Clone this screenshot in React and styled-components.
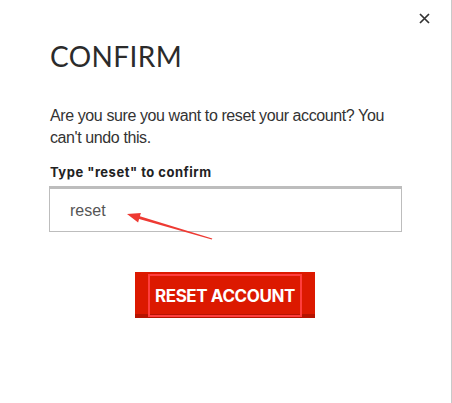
import React, { useState } from "react";
import styled, { createGlobalStyle } from "styled-components";

const GlobalStyle = createGlobalStyle`
  html, body {
    margin: 0;
    padding: 0;
    background: #ffffff;
  }
  * {
    box-sizing: border-box;
  }
`;

const ConfirmModal = () => {
  const [value, setValue] = useState("reset");

  return (
    <>
      <GlobalStyle />
      <ModalContainer>
        <CloseButton aria-label="close">
          <svg width="11" height="11" viewBox="0 0 11 11">
            <path d="M1 1L10 10M10 1L1 10" stroke="#333" strokeWidth="1.7" />
          </svg>
        </CloseButton>
        <Title>CONFIRM</Title>
        <Message>
          Are you sure you want to reset your account? You can't undo this.
        </Message>
        <Label htmlFor="confirm-input">Type "reset" to confirm</Label>
        <InputWrap>
          <Input
            id="confirm-input"
            value={value}
            onChange={(e) => setValue(e.target.value)}
          />
          {/* red annotation arrow */}
          <Arrow width="100" height="40" viewBox="0 0 100 40">
            <polygon
              points="8,8 21.9,6.9 20.9,10.3 93.3,32.6 92.8,33.4 20.1,13.1 19.1,16.5"
              fill="#ee3a33"
            />
          </Arrow>
        </InputWrap>
        <ButtonRow>
          <ResetButton disabled={value !== "reset"}>
            <Highlight>RESET ACCOUNT</Highlight>
          </ResetButton>
        </ButtonRow>
      </ModalContainer>
    </>
  );
};

const ModalContainer = styled.div`
  position: relative;
  width: 452px;
  height: 403px;
  padding: 38px 46px 0 49px;
  border-right: 1px solid #c9c9c9;
  background: #ffffff;
  display: flex;
  flex-direction: column;
`;

const CloseButton = styled.button`
  position: absolute;
  top: 13px;
  right: 21px;
  padding: 0;
  border: none;
  background: none;
  display: flex;
  cursor: pointer;
`;

const Title = styled.h1`
  margin: 0 0 0 1px;
  font-family: "Lato", "Liberation Sans", sans-serif;
  font-size: 28px;
  font-weight: 400;
  line-height: 36px;
  letter-spacing: 0.4px;
  color: #2b2b2b;
`;

const Message = styled.p`
  margin: 31px 0 0 1px;
  font-family: "Liberation Sans", Arial, sans-serif;
  font-size: 16px;
  line-height: 22px;
  letter-spacing: -0.4px;
  color: #333333;
`;

const Label = styled.label`
  display: block;
  margin: 15px 0 0 1px;
  font-family: "Inter", "Liberation Sans", sans-serif;
  font-size: 13px;
  font-weight: 700;
  line-height: 16px;
  letter-spacing: 0.5px;
  color: #222222;
`;

const InputWrap = styled.div`
  position: relative;
  margin-top: 6px;
  width: 353px;
`;

const Input = styled.input`
  display: block;
  width: 100%;
  height: 46px;
  padding: 2px 20px 0;
  border: 1px solid #bdbdbd;
  border-top: 3px solid #bdbdbd;
  border-radius: 0;
  font-family: "Liberation Sans", Arial, sans-serif;
  font-size: 16px;
  color: #555555;
  outline: none;
`;

const Arrow = styled.svg`
  position: absolute;
  left: 70px;
  top: 20px;
  pointer-events: none;
`;

const ButtonRow = styled.div`
  display: flex;
  margin-top: 40px;
  padding-left: 86px;
`;

const ResetButton = styled.button`
  display: flex;
  align-items: stretch;
  width: 180px;
  height: 46px;
  padding: 2px 13px 1px;
  border: none;
  border-bottom: 4px solid #b61300;
  border-radius: 0;
  background: #dc1900;
  cursor: pointer;

  &:disabled {
    opacity: 0.6;
  }
`;

const Highlight = styled.span`
  flex: 1;
  display: flex;
  align-items: center;
  justify-content: center;
  margin-bottom: -4px;
  border: 2px solid #ff3d3d;
  font-family: "Inter", "Liberation Sans", sans-serif;
  font-size: 17px;
  font-weight: 700;
  color: #ffffff;
  letter-spacing: -0.4px;
`;

export default ConfirmModal;
